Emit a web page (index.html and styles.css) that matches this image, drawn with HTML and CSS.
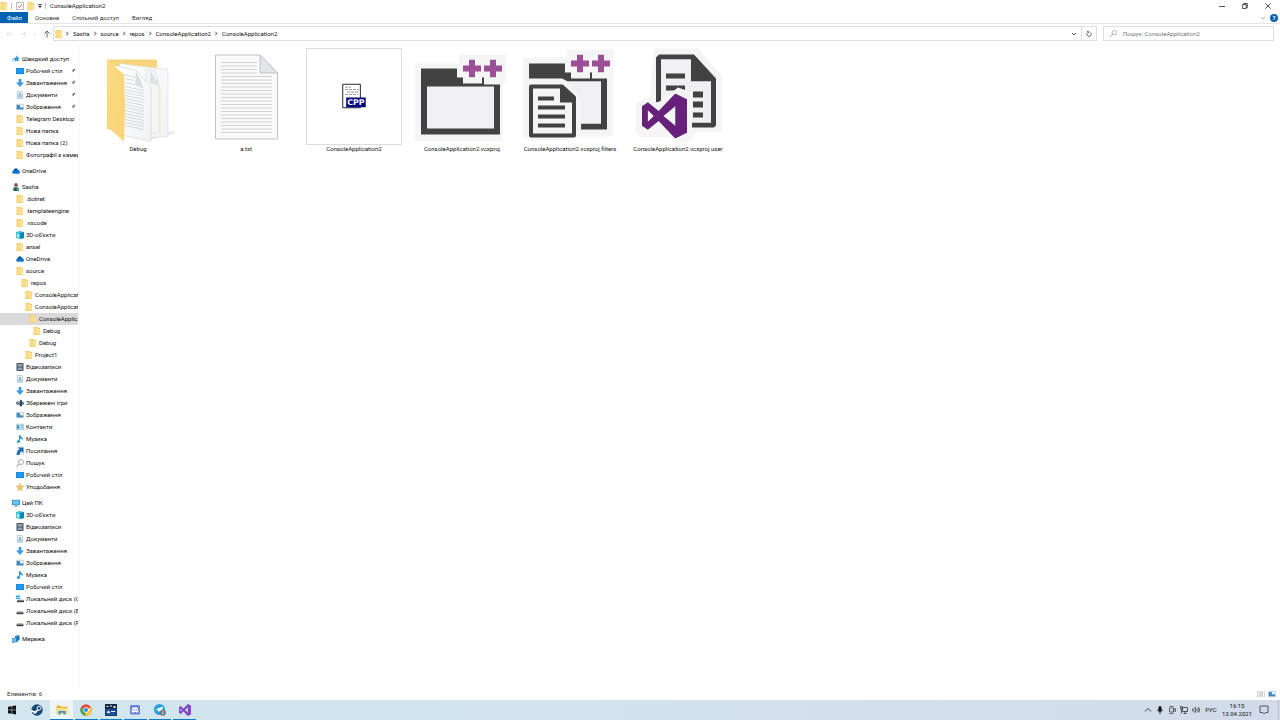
FILE: index.html
```html
<!DOCTYPE html>
<html lang="uk">
<head>
<meta charset="utf-8">
<title>ConsoleApplication2</title>
<link rel="stylesheet" href="styles.css">
</head>
<body>
<svg class="sprite" aria-hidden="true">
  <symbol id="folder" viewBox="0 0 8 8"><path fill="#e9c766" d="M.5 0H5l.6 1H7v7H.5z"/><path fill="#fbdc85" d="M.9.4h3.900l.5 1.200V7.500H.9z"/><path fill="#ffe9a8" d="M5 2h1.600v5.500H5z"/></symbol>
  <symbol id="star" viewBox="0 0 8 8"><path fill="#2f93dc" d="M5 .3l.6 2.100L8 2.700 6.200 4.200l.7 2.600L4.700 5.400 2.800 7 3.200 4.700.8 3.800l2.500-.9z"/><path stroke="#6fb4e6" stroke-width=".7" d="M0 6.500l3-2M0 4.800l2-.7"/></symbol>
  <symbol id="fav" viewBox="0 0 8 8"><path fill="#f6c36b" stroke="#e29a35" stroke-width=".5" d="M4 .4l1 2.500 2.700.2-2.100 1.700.7 2.700L4 6 1.700 7.500l.7-2.700L.3 3.100 3 2.900z"/></symbol>
  <symbol id="desktop" viewBox="0 0 8 8"><path fill="#0c7fd4" d="M0 1h8v6H0z"/><path fill="#1e9bf0" d="M.4 1.400h7.200v4.800H.4z"/></symbol>
  <symbol id="down" viewBox="0 0 8 8"><path fill="#3f9be3" d="M2.600 0h2.800v3.500H8L4 8 0 3.500h2.600z"/></symbol>
  <symbol id="doc" viewBox="0 0 8 8"><path fill="#eef6fb" stroke="#8ea9ba" stroke-width=".6" d="M1.300.3h4l1.400 1.400v6H1.300z"/><path stroke="#3e91c8" stroke-width=".8" d="M3 2.500h2M2.300 4.200h3.400M2.300 5.800h3.400"/></symbol>
  <symbol id="image" viewBox="0 0 8 8"><path fill="#e9f2f8" stroke="#9aabb5" stroke-width=".5" d="M.3 1.200h7.400v5.600H.3z"/><path fill="#3d87bd" d="M.8 2h3.400l-.6 2.200L7.200 4.600v1.600H.8z"/></symbol>
  <symbol id="cloud" viewBox="0 0 8 8"><path fill="#1377cf" d="M2 6.800C-.3 6.800-.4 4 1.500 3.700 1.800 1.200 5 .8 5.800 3.100 8.500 3 8.600 6.800 6.500 6.800z"/><path fill="#0759a5" d="M1.500 3.700C2 1.200 5 .9 5.800 3.100L3 4.200z"/></symbol>
  <symbol id="person" viewBox="0 0 8 8"><circle cx="4" cy="1.900" r="1.900" fill="#7b5a48"/><path fill="#469b75" d="M1 8V5.200Q4 2.800 7 5.200V8z"/><path fill="#344e54" d="M2.500 4.500h2V8h-2z"/></symbol>
  <symbol id="cube" viewBox="0 0 8 8"><path fill="#3cc6dd" d="M0 1l4-1 4 1v6L4 8 0 7z"/><path fill="#0787b0" d="M4 2l4-1v6L4 8z"/><path fill="#bff1f7" d="M1 3l2 .4v2.800L1 5.800z"/></symbol>
  <symbol id="film" viewBox="0 0 8 8"><path fill="#48525c" d="M.5 0h7v8h-7z"/><path fill="#8eaabd" d="M2 1h4v2.500H2zM2 4.500h4V7H2z"/><path stroke="#d0d5d8" stroke-width=".5" stroke-dasharray=".6 .6" d="M1.200 0v8M6.800 0v8"/></symbol>
  <symbol id="games" viewBox="0 0 8 8"><path fill="#7b858e" d="M0 3l2.500-1L4 3v3L2.500 6.500 0 5z"/><path fill="#3b4650" d="M4 .8l2 .4V7L4 7.800z"/><path fill="#2f80b8" d="M6 2.700l2 .5v2L6 6z"/></symbol>
  <symbol id="contact" viewBox="0 0 8 8"><path fill="#dff1f9" stroke="#6599b2" stroke-width=".5" d="M.3 1.200h7.400v5.600H.3z"/><path fill="#3b91b8" d="M1 2.300h2.300v3.500H1zM4.500 2.500H7v.7H4.500zM4.500 4.500H7v.7H4.500z"/></symbol>
  <symbol id="music" viewBox="0 0 8 8"><path fill="#2094dc" d="M3 0h1c.5 2 3.500 2 2.600 5.200C6 3.700 5 3.500 4 3.400v2.800C4 8.300 1 8.600 1 6.700 1 5.500 2.200 5.100 3 5.400z"/></symbol>
  <symbol id="link" viewBox="0 0 8 8"><path fill="#d7eaf6" d="M1 0h7v8H1z"/><path fill="#236ea9" d="M2 .5h5.500V6L5.700 4.200C4 5 3.500 6.500 3.500 8H.5C.5 5 1.800 3 3.700 2.200z"/></symbol>
  <symbol id="search" viewBox="0 0 8 8"><circle cx="5" cy="3" r="2.500" fill="none" stroke="currentColor" stroke-width=".8"/><path stroke="currentColor" d="M3 5L.4 7.600"/></symbol>
  <symbol id="pc" viewBox="0 0 8 8"><path fill="#2a83bc" d="M0 .8h8v5.400H0z"/><path fill="#62c4f1" d="M.6 1.400h6.800v4.100H.6z"/><path fill="#6c8799" d="M3 6.200h2V7h1.500v.6h-5V7H3z"/></symbol>
  <symbol id="disk" viewBox="0 0 8 8"><path fill="#b5babd" d="M1.500 4h5l1 1.500h-7z"/><path fill="#3b4448" d="M.5 5.400h7v1.800h-7z"/></symbol>
  <symbol id="osdisk" viewBox="0 0 8 8"><path fill="#22a4dc" d="M0 .5h1.800v1.600H0zM2.100.5h1.800v1.600H2.100zM0 2.400h1.800V4H0zM2.100 2.400h1.800V4H2.100z"/><path fill="#b5babd" d="M2 4.500h5l1 1H1z"/><path fill="#3b4448" d="M1 5.400h7v1.800H1z"/></symbol>
  <symbol id="network" viewBox="0 0 8 8"><path fill="#2181bd" d="M3 1l4-1 1 4-3 3-5 1V3h3z"/><path fill="#69bdea" d="M0 3.600l4-.5v3.600L0 7.500z"/></symbol>
  <symbol id="pin" viewBox="0 0 6 6"><path fill="#788086" d="M3.500.3l2.200 2.200-.6.3-.5-.1-1 1 .1 1-.5.4-1.300-1.300L.3 5.600l1.500-1.900L.8 2.600l.5-.4 1 .1 1-1z"/></symbol>
  <symbol id="plus" viewBox="0 0 18 18"><path fill="#9b4f96" d="M6 0h6v6h6v6h-6v6H6v-6H0V6h6z"/></symbol>
  <symbol id="vs" viewBox="0 0 46 46"><path fill="#68217a" fill-rule="evenodd" d="M0 13l6-4 11 9L34 0l12 6v34l-12 6-17-18-11 9-6-4zM6 17v12l6-6zM34 13L22 23l12 10z"/></symbol>
</svg>

<div class="window">
  <header class="titlebar">
    <svg class="ico"><use href="#folder"/></svg>
    <span class="bar"></span>
    <button class="plain" aria-label="Властивості"><svg class="ico" viewBox="0 0 8 8"><path fill="#fff" stroke="#9d9d9d" stroke-width=".7" d="M.5.500h7v7h-7z"/><path fill="none" stroke="#d1584a" stroke-width=".8" d="M2 4l1.500 1.700L6 2"/></svg></button>
    <button class="plain" aria-label="Нова папка"><svg class="ico"><use href="#folder"/></svg></button>
    <button class="plain" aria-label="Настроїти"><svg class="caret" viewBox="0 0 4 6"><path fill="#333" d="M0 1h4v.7H0zM0 2.700h4L2 5z"/></svg></button>
    <span class="bar"></span>
    <h1 class="title">ConsoleApplication2</h1>
    <div class="controls">
      <button class="plain" aria-label="Згорнути"><svg viewBox="0 0 6 6"><path stroke="#222" stroke-width=".8" d="M0 3.500h6"/></svg></button>
      <button class="plain" aria-label="Відновити"><svg viewBox="0 0 6 6"><path fill="none" stroke="#222" stroke-width=".8" d="M.6 1.600h3.600v4H.6zM1.800 1.500V.5h3.500v4h-1"/></svg></button>
      <button class="plain" aria-label="Закрити"><svg viewBox="0 0 6 6"><path stroke="#222" stroke-width=".8" d="M.4.400l5.200 5.200M5.600.400L.4 5.600"/></svg></button>
    </div>
  </header>

  <nav class="tabs">
    <button class="tab file">Файл</button>
    <button class="tab">Основне</button>
    <button class="tab">Спільний доступ</button>
    <button class="tab">Вигляд</button>
    <div class="help">
      <button class="plain" aria-label="Розгорнути стрічку"><svg class="chev" viewBox="0 0 6 6"><path fill="none" stroke="#a5a5a5" stroke-width=".8" d="M1 2l2 2 2-2"/></svg></button>
      <button class="question" aria-label="Довідка">?</button>
    </div>
  </nav>

  <div class="address">
    <div class="arrows">
      <button class="plain" aria-label="Назад"><svg class="ico" viewBox="0 0 8 8"><path fill="none" stroke="#d4d4d4" stroke-width=".7" d="M7 4H1M3.500 1.500L1 4l2.500 2.500"/></svg></button>
      <button class="plain" aria-label="Вперед"><svg class="ico" viewBox="0 0 8 8"><path fill="none" stroke="#d4d4d4" stroke-width=".7" d="M1 4h6M4.500 1.500L7 4 4.500 6.500"/></svg></button>
      <button class="plain" aria-label="Останні"><svg class="caret" viewBox="0 0 4 6"><path fill="none" stroke="#c5c5c5" stroke-width=".6" d="M.7 2.500L2 3.800l1.300-1.300"/></svg></button>
      <button class="plain" aria-label="Вгору"><svg class="ico" viewBox="0 0 8 8"><path fill="none" stroke="#555" stroke-width=".9" d="M4 7.500V1M1.300 3.700L4 1l2.700 2.700"/></svg></button>
    </div>
    <div class="path">
      <svg class="ico"><use href="#folder"/></svg>
      <a href="#">Sasha</a><a href="#">source</a><a href="#">repos</a><a href="#">ConsoleApplication2</a><a href="#">ConsoleApplication2</a>
      <button class="plain drop" aria-label="Попередні розташування"><svg class="chev" viewBox="0 0 6 6"><path fill="none" stroke="#444" stroke-width=".9" d="M1 2l2 2 2-2"/></svg></button>
      <button class="plain refresh" aria-label="Оновити"><svg class="chev" viewBox="0 0 6 6"><path fill="none" stroke="#444" stroke-width=".8" d="M4.600 1.500a2.200 2.200 0 1 1-2.500-.3M1 .5h1.600v1.600"/></svg></button>
    </div>
    <label class="search"><svg class="ico"><use href="#search"/></svg><input type="search" aria-label="Пошук" placeholder="Пошук: ConsoleApplication2"></label>
  </div>

  <div class="main">
    <nav class="tree">
      <ul>
        <li><a href="#"><svg class="ico"><use href="#star"/></svg>Швидкий доступ</a></li>
        <li class="l1"><a href="#"><svg class="ico"><use href="#desktop"/></svg>Робочий стіл<svg class="pin"><use href="#pin"/></svg></a></li>
        <li class="l1"><a href="#"><svg class="ico"><use href="#down"/></svg>Завантаження<svg class="pin"><use href="#pin"/></svg></a></li>
        <li class="l1"><a href="#"><svg class="ico"><use href="#doc"/></svg>Документи<svg class="pin"><use href="#pin"/></svg></a></li>
        <li class="l1"><a href="#"><svg class="ico"><use href="#image"/></svg>Зображення<svg class="pin"><use href="#pin"/></svg></a></li>
        <li class="l1"><a href="#"><svg class="ico"><use href="#folder"/></svg>Telegram Desktop</a></li>
        <li class="l1"><a href="#"><svg class="ico"><use href="#folder"/></svg>Нова папка</a></li>
        <li class="l1"><a href="#"><svg class="ico"><use href="#folder"/></svg>Нова папка (2)</a></li>
        <li class="l1"><a href="#"><svg class="ico"><use href="#folder"/></svg>Фотографії з камери</a></li>
      </ul>
      <ul>
        <li><a href="#"><svg class="ico"><use href="#cloud"/></svg>OneDrive</a></li>
      </ul>
      <ul>
        <li><a href="#"><svg class="ico"><use href="#person"/></svg>Sasha</a></li>
        <li class="l1"><a href="#"><svg class="ico"><use href="#folder"/></svg>.dotnet</a></li>
        <li class="l1"><a href="#"><svg class="ico"><use href="#folder"/></svg>.templateengine</a></li>
        <li class="l1"><a href="#"><svg class="ico"><use href="#folder"/></svg>.vscode</a></li>
        <li class="l1"><a href="#"><svg class="ico"><use href="#cube"/></svg>3D-об'єкти</a></li>
        <li class="l1"><a href="#"><svg class="ico"><use href="#folder"/></svg>ansel</a></li>
        <li class="l1"><a href="#"><svg class="ico"><use href="#cloud"/></svg>OneDrive</a></li>
        <li class="l1"><a href="#"><svg class="ico"><use href="#folder"/></svg>source</a></li>
        <li class="l2"><a href="#"><svg class="ico"><use href="#folder"/></svg>repos</a></li>
        <li class="l3"><a href="#"><svg class="ico"><use href="#folder"/></svg>ConsoleApplication1</a></li>
        <li class="l3"><a href="#"><svg class="ico"><use href="#folder"/></svg>ConsoleApplication2</a></li>
        <li class="l4 current"><a href="#"><svg class="ico"><use href="#folder"/></svg>ConsoleApplication2</a></li>
        <li class="l5"><a href="#"><svg class="ico"><use href="#folder"/></svg>Debug</a></li>
        <li class="l4"><a href="#"><svg class="ico"><use href="#folder"/></svg>Debug</a></li>
        <li class="l3"><a href="#"><svg class="ico"><use href="#folder"/></svg>Project1</a></li>
        <li class="l1"><a href="#"><svg class="ico"><use href="#film"/></svg>Відеозаписи</a></li>
        <li class="l1"><a href="#"><svg class="ico"><use href="#doc"/></svg>Документи</a></li>
        <li class="l1"><a href="#"><svg class="ico"><use href="#down"/></svg>Завантаження</a></li>
        <li class="l1"><a href="#"><svg class="ico"><use href="#games"/></svg>Збережені ігри</a></li>
        <li class="l1"><a href="#"><svg class="ico"><use href="#image"/></svg>Зображення</a></li>
        <li class="l1"><a href="#"><svg class="ico"><use href="#contact"/></svg>Контакти</a></li>
        <li class="l1"><a href="#"><svg class="ico"><use href="#music"/></svg>Музика</a></li>
        <li class="l1"><a href="#"><svg class="ico"><use href="#link"/></svg>Посилання</a></li>
        <li class="l1"><a href="#"><svg class="ico lens"><use href="#search"/></svg>Пошук</a></li>
        <li class="l1"><a href="#"><svg class="ico"><use href="#desktop"/></svg>Робочий стіл</a></li>
        <li class="l1"><a href="#"><svg class="ico"><use href="#fav"/></svg>Уподобання</a></li>
      </ul>
      <ul>
        <li><a href="#"><svg class="ico"><use href="#pc"/></svg>Цей ПК</a></li>
        <li class="l1"><a href="#"><svg class="ico"><use href="#cube"/></svg>3D-об'єкти</a></li>
        <li class="l1"><a href="#"><svg class="ico"><use href="#film"/></svg>Відеозаписи</a></li>
        <li class="l1"><a href="#"><svg class="ico"><use href="#doc"/></svg>Документи</a></li>
        <li class="l1"><a href="#"><svg class="ico"><use href="#down"/></svg>Завантаження</a></li>
        <li class="l1"><a href="#"><svg class="ico"><use href="#image"/></svg>Зображення</a></li>
        <li class="l1"><a href="#"><svg class="ico"><use href="#music"/></svg>Музика</a></li>
        <li class="l1"><a href="#"><svg class="ico"><use href="#desktop"/></svg>Робочий стіл</a></li>
        <li class="l1"><a href="#"><svg class="ico"><use href="#osdisk"/></svg>Локальний диск (C:)</a></li>
        <li class="l1"><a href="#"><svg class="ico"><use href="#disk"/></svg>Локальний диск (E:)</a></li>
        <li class="l1"><a href="#"><svg class="ico"><use href="#disk"/></svg>Локальний диск (F:)</a></li>
      </ul>
      <ul>
        <li><a href="#"><svg class="ico"><use href="#network"/></svg>Мережа</a></li>
      </ul>
    </nav>

    <main class="files">
      <button class="item">
        <svg viewBox="0 0 96 96">
          <defs>
            <linearGradient id="fold" x1="0" x2="1" y2="1"><stop offset="0" stop-color="#fbdc82"/><stop offset="1" stop-color="#f7d374"/></linearGradient>
            <linearGradient id="sheet" x2="1" y2="1"><stop offset="0" stop-color="#fff"/><stop offset="1" stop-color="#f1f2f4"/></linearGradient>
          </defs>
          <path fill="#ececec" d="M54 90l30-8 1 3-22 6z"/>
          <path fill="#f5d47b" d="M17 11h50v70H17z"/>
          <path fill="url(#sheet)" stroke="#d9dadc" stroke-width=".6" d="M29 15l49 6v67l-20 1z"/>
          <path fill="#f4f5f7" stroke="#d5d6d8" stroke-width=".6" d="M56 20l9 2 4 15v46l-13 5z"/>
          <path fill="#dfe1e3" d="M60 22l10 15-10-2z"/>
          <path stroke="#fbe9b8" d="M70 38v48"/>
          <path fill="url(#sheet)" stroke="#d0d2d4" stroke-width=".6" d="M25 17l22 5 14 17v54l-27-6z"/>
          <path fill="#dcdee0" d="M46 22l8 18-9-3z"/>
          <path stroke="#cdd0d2" stroke-width=".8" d="M34 26l11 3M35 30l9 2M35 34l10 2M35 38l19 4M35 41l19 4M35 44l19 4M35 47l19 4M35 50l19 4M35 53l19 4M35 56l19 4M35 59l19 4M35 62l19 4M35 65l19 4M35 68l19 4M35 71l19 4M35 74l19 4M35 77l19 4"/>
          <path fill="url(#fold)" d="M17 11l17 15 1 33-1 34-17-15z"/>
        </svg>
        <span>Debug</span>
      </button>
      <button class="item">
        <svg viewBox="0 0 96 96">
          <path fill="#fafafb" stroke="#bfc2c4" d="M17.500 6.500H62l17.500 18v66H17.500z"/>
          <path fill="#e3e4e6" stroke="#bfc2c4" d="M62 6.500v18h17.500z"/>
          <path stroke="#c6c8ca" stroke-width=".8" d="M23 14h36M23 17.500h36M23 21h36M23 24.500h36M23 28h51M23 31.500h51M23 35h51M23 38.500h51M23 42h51M23 45.500h51M23 49h51M23 52.500h51M23 56h51M23 59.500h51M23 63h51M23 66.500h51M23 70h51M23 73.500h51M23 77h51M23 80.500h51M23 84h51"/>
        </svg>
        <span>a.txt</span>
      </button>
      <button class="item framed">
        <svg viewBox="0 0 96 96">
          <path fill="#fff" stroke="#222" d="M36.500 35.500h18v24h-18z"/>
          <path stroke="#777" stroke-width=".8" stroke-dasharray="3 1" d="M39 38.500h6M39 41h14M41 43.500h12M39 46h13"/>
          <path fill="#040480" d="M40 49h20v10H40z"/>
          <text class="cpp" x="50" y="57" text-anchor="middle">CPP</text>
        </svg>
        <span>ConsoleApplication2</span>
      </button>
      <button class="item">
        <svg viewBox="0 -1 96 96">
          <path fill="#f5f5f6" d="M1 14h44V5h47v28h-3v59H1z"/>
          <path fill="#424242" d="M7 19h36v9h6v6h19v-2h2v3h16v50H7z"/>
          <path fill="#f0eff1" d="M13 37h67v42H13z"/>
          <path fill="#424242" d="M68 28h2v8h-2z"/>
          <use href="#plus" x="49" y="10" width="18" height="18"/><use href="#plus" x="70" y="10" width="18" height="18"/>
        </svg>
        <span>ConsoleApplication2.vcxproj</span>
      </button>
      <button class="item">
        <svg viewBox="0 0 96 96">
          <path fill="#f5f5f6" d="M1 9h44V1h47v28h-1v59H50l-4 4H6l-5-5z"/>
          <path fill="#424242" d="M7 15h36v9h6v6h19v-6h2v6h15v51H59v-6h20V33H46l-6-3H7z"/>
          <path fill="#f0eff1" d="M46 33h33v42H59V51z"/>
          <path fill="#f5f5f6" d="M4 35l4-3h34l15 14v39H4z"/>
          <path fill="#f5f5f6" stroke="#424242" stroke-width="4" stroke-linejoin="round" d="M9 38h31l12 11v38H9z"/>
          <path fill="#424242" d="M38 36l16 16v2H38zM16 48h16v4H16zM16 57h27v4H16zM16 66h27v4H16zM16 75h27v4H16z"/>
          <use href="#plus" x="49" y="6" width="18" height="18"/><use href="#plus" x="70" y="6" width="18" height="18"/>
        </svg>
        <span>ConsoleApplication2.vcxproj.filters</span>
      </button>
      <button class="item">
        <svg viewBox="0 0 96 96">
          <path fill="#f5f5f6" d="M24 0h44l24 27v57H66L54 96l-14-7H10l-4-6V55l14-7z"/>
          <path fill="#424242" d="M29 6h35l22 24v47l-2 2H62v-5h19V33H61V11H31v41l-5 4V9z"/>
          <path fill="#f0eff1" d="M31 11h30v22h20v41H61V45L50 36 31 52z"/>
          <path fill="#424242" d="M36 25h19v5H36zM36 37h19v5H36zM63 43h10v6H63zM63 53h10v6H63zM63 64h10v5H63z"/>
          <path fill="#f5f5f6" d="M8 53l8-4 9 5 5-1 18-14 14 5v47l-12 3-14-9-20-1-8-4z"/>
          <use href="#vs" x="12" y="45" width="45" height="45"/>
        </svg>
        <span>ConsoleApplication2.vcxproj.user</span>
      </button>
    </main>
  </div>

  <footer class="status">
    <span>Елементів: 6</span>
    <div class="views">
      <button class="plain" aria-label="Таблиця"><svg class="ico" viewBox="0 0 8 8"><path stroke="#9a9a9a" stroke-width=".8" stroke-dasharray="1.500 .7 4 .7" d="M0 2h8M0 4h8M0 6h8"/></svg></button>
      <button class="plain" aria-label="Великі значки"><svg class="ico"><use href="#image"/></svg></button>
    </div>
  </footer>
</div>

<footer class="taskbar">
  <div class="apps">
    <button aria-label="Пуск"><svg viewBox="0 0 12 12"><path fill="#111" d="M2 2.700l3.700-.5v3.500H2zM6.200 2.100L10 1.500v4.200H6.200zM2 6.200h3.700v3.500L2 9.200zM6.200 6.200H10v4.200l-3.800-.6z"/></svg></button>
    <button aria-label="Steam"><svg viewBox="0 0 12 12"><circle cx="6" cy="6" r="5.700" fill="#174a7a"/><path fill="none" stroke="#fff" stroke-width="1.600" d="M0 6.500l4 1.800 3.500-3"/><circle cx="8" cy="4.300" r="1.900" fill="#174a7a" stroke="#fff"/><circle cx="4" cy="8.300" r="1.400" fill="#fff"/></svg></button>
    <button class="open active" aria-label="Провідник"><svg viewBox="0 0 12 12"><path fill="#e9b83b" d="M.5 1.500h4l1 1.200h6V10H.5z"/><path fill="#fde18a" d="M.5 4h11v6.500H.5z"/><path fill="#3c8fd0" d="M2.500 10.500V7h7v3.500h-2V8.700h-3v1.800z"/></svg></button>
    <button class="open" aria-label="Chrome"><svg viewBox="0 0 12 12"><circle cx="6" cy="6" r="5.700" fill="#e64a3b"/><path fill="#43a85a" d="M6 6L1.100 3.200A5.700 5.700 0 0 0 5.400 11.700z"/><path fill="#fbcb3c" d="M6 6L5.400 11.700A5.700 5.700 0 0 0 11.200 3.800H6z"/><circle cx="6" cy="6" r="2.700" fill="#fff"/><circle cx="6" cy="6" r="2.100" fill="#4384ed"/></svg></button>
    <button class="open" aria-label="Програма"><svg viewBox="0 0 12 12"><path fill="#182a42" d="M0 0h12v12H0z"/><path fill="#1d4f9c" d="M.5 5h11v6.500H.5z"/><path fill="#e7f2ff" d="M1.500 2h2v1h-2zM5 1.500h2v1H5zM8.500 2h2v2h-2zM2 8l1.500-1.500L5 8v1H2zM6 7h4v1H6z"/></svg></button>
    <button class="open" aria-label="Discord"><svg viewBox="0 0 12 12"><rect x="1" y="1" width="10" height="9.500" rx="1.500" fill="#6c82d0"/><path fill="#fff" d="M3.500 3.500h5l1 4.500-1.800.7L7 8H5l-.7.7L2.500 8z"/><circle cx="4.800" cy="6" r=".8" fill="#6c82d0"/><circle cx="7.200" cy="6" r=".8" fill="#6c82d0"/></svg></button>
    <button class="open" aria-label="Telegram"><svg viewBox="0 0 12 12"><circle cx="5.500" cy="5.500" r="5.500" fill="#2ba0dc"/><path fill="#fff" d="M1.800 5.300L9 2.400 7.700 8.500 5.500 7 4.300 8 4 6.200z"/><circle cx="8.800" cy="8.800" r="3" fill="#6d7880"/><path stroke="#fff" stroke-width=".8" d="M8.800 7.200v3.200"/></svg></button>
    <button class="open" aria-label="Visual Studio"><svg viewBox="0 0 12 12"><path fill="#8547c5" fill-rule="evenodd" d="M0 3l1.500-1 3 2.500L8.800 0 12 1.500v9L8.800 12 4.500 7.500l-3 2.500L0 9zM1.500 4.500v3L3 6zM8.800 3.500L6 6l2.800 2.500z"/></svg></button>
  </div>
  <div class="tray">
    <button class="plain" aria-label="Приховані піктограми"><svg viewBox="0 0 8 8"><path fill="none" stroke="#333" stroke-width=".9" d="M1 5.500l3-3 3 3"/></svg></button>
    <button class="plain" aria-label="Мікрофон"><svg viewBox="0 0 8 8"><rect x="2.500" width="3" height="5.500" rx="1.500" fill="#111"/><path fill="none" stroke="#111" stroke-width=".8" d="M1.700 3.500v1Q4 7.500 6.300 4.500v-1M4 6v2"/></svg></button>
    <button class="plain" aria-label="Камера"><svg viewBox="0 0 8 8"><path fill="none" stroke="#333" stroke-width=".7" d="M1.500 2h4v4h-4zM5.500 3.500L7.500 2.500v3l-2-1M1.500.500h4M1.500 7.500h4"/></svg></button>
    <button class="plain" aria-label="Мережа"><svg viewBox="0 0 8 8"><path fill="none" stroke="#333" stroke-width=".8" d="M2.500 1.500h5v4h-5zM.4.500h2v2.300h-2zM1.400 2.800v4.700M3.500 7.500h3M5 5.500v2"/></svg></button>
    <button class="plain" aria-label="Гучність"><svg viewBox="0 0 8 8"><path fill="none" stroke="#333" stroke-width=".7" d="M.5 3h1.200L3.500 1.300v5.400L1.700 5H.5zM4.700 3q.8 1 0 2M5.700 2q1.500 2 0 4M6.700 1.200q2 2.800 0 5.600"/></svg></button>
    <button class="plain lang">РУС</button>
    <button class="plain clock"><time>16:15</time><time>13.04.2021</time></button>
    <button class="plain notice" aria-label="Сповіщення"><svg viewBox="0 0 10 10"><path fill="none" stroke="#333" stroke-width=".8" d="M1 1h8v6.500H6.500L5 9 3.700 7.500H1z"/></svg></button>
  </div>
</footer>
</body>
</html>
```
FILE: styles.css
```css
* { box-sizing: border-box; }

body {
  margin: 0;
  min-height: 100vh;
  display: flex;
  flex-direction: column;
  background: #fff;
  color: #111;
  font: 6px/8px Roboto, "Noto Sans", sans-serif;
}

button, input { font: inherit; color: inherit; }
button { margin: 0; padding: 0; border: 0; background: none; }
a { color: inherit; text-decoration: none; }
svg { display: block; flex: none; }

.sprite { position: absolute; width: 0; height: 0; }
.ico { width: 8px; height: 8px; }
.chev { width: 6px; height: 6px; }
.caret { width: 4px; height: 6px; }
.plain { display: flex; align-items: center; justify-content: center; }

.window { flex: 1; display: flex; flex-direction: column; }

.titlebar { display: flex; align-items: center; height: 12px; gap: 3px; }
.bar { width: 1px; height: 6px; margin-right: 1px; background: #bbb; }
.title { margin: 0; font-size: 6px; font-weight: 400; }
.controls { display: flex; margin-left: auto; padding-right: 1px; }
.controls button { width: 23px; height: 11px; }
.controls svg { width: 6px; height: 6px; }

.tabs { display: flex; height: 12px; border-bottom: 1px solid #e6e6e6; color: #333; }
.tab { padding: 0 6px 0 7px; }
.file { width: 28px; background: #0063b1; color: #fff; }
.help { display: flex; align-items: center; gap: 4px; margin-left: auto; padding-right: 2px; }
.question { width: 8px; height: 8px; border-radius: 50%; background: #0b62b5; color: #fff; font-weight: 700; }

.address { display: flex; height: 20px; padding: 2px 6px 3px; gap: 6px; }
.arrows { display: flex; align-items: center; gap: 5px; width: 41px; }
.arrows .caret { margin: 0 1px; }
.path { flex: 1; display: flex; align-items: center; border: 1px solid #dedede; }
.path .ico { margin-left: 1px; }
.path a::before {
  content: "";
  display: inline-block;
  width: 2px;
  height: 2px;
  margin: 0 5px 1px 3px;
  border: solid #777;
  border-width: 1px 1px 0 0;
  transform: rotate(45deg);
}
.path .ico + a { margin-left: -1px; }
.drop { width: 14px; height: 100%; margin-left: auto; }
.refresh { width: 15px; height: 100%; border-left: 1px solid #dedede; }
.search { display: flex; align-items: center; gap: 6px; width: 171px; padding-left: 6px; border: 1px solid #dedede; color: #999; }
.search .ico { width: 7px; height: 7px; }
.search input { flex: 1; min-width: 0; padding: 0; border: 0; outline: 0; background: none; }
.search input::placeholder { color: #777; opacity: 1; }

.main { flex: 1; display: flex; }
.tree { width: 80px; padding: 9px 1px 0 0; border-right: 1px solid #f7f7f7; }
.tree ul { margin: 0 0 4px; padding: 0; list-style: none; }
.tree li { padding-left: 12px; overflow: hidden; }
.tree a { display: flex; align-items: center; gap: 2px; height: 12px; padding-bottom: 1px; white-space: nowrap; }
.tree .l1 { padding-left: 16px; }
.tree .l2 { padding-left: 21px; }
.tree .l3 { padding-left: 25px; }
.tree .l4 { padding-left: 29px; }
.tree .l5 { padding-left: 33px; }
.tree .current { background: #d9d9d9; }
.pin { width: 5px; height: 5px; margin: 0 2px 0 auto; }
.lens { color: #7d9db3; }

.files { flex: 1; display: flex; flex-wrap: wrap; align-content: flex-start; gap: 12px; padding: 4px 10px; }
.item { width: 96px; display: flex; flex-direction: column; align-items: center; white-space: nowrap; }
.item svg { width: 96px; height: 97px; }
.framed svg { border: 1px solid #dcdcdc; }
.cpp { fill: #fff; font: 700 8px "DejaVu Sans", sans-serif; }

.status { display: flex; align-items: center; justify-content: space-between; height: 12px; padding: 0 4px 0 7px; color: #333; }
.views { display: flex; gap: 3px; }

.taskbar { display: flex; justify-content: space-between; height: 20px; background: linear-gradient(90deg, #d1e6ee, #d3e3ec 50%, #d1dbea); }
.apps { display: grid; grid-template-columns: repeat(8, 1fr); width: 197px; }
.apps button { display: grid; place-items: center; margin: 0 1px; }
.apps svg { width: 12px; height: 12px; }
.apps .open { border-bottom: 1px solid #0f7ac8; padding-top: 1px; }
.apps .active { background: #edf5f8; }
.tray { display: flex; align-items: center; margin-right: 1px; border-right: 1px solid #b8c2cf; }
.tray button { width: 12px; height: 20px; }
.tray svg { width: 8px; height: 8px; }
.tray .lang { width: 18px; }
.tray .clock { width: 34px; flex-direction: column; }
.tray .notice { width: 20px; margin-right: 4px; }
.tray .notice svg { width: 10px; height: 10px; }
```
